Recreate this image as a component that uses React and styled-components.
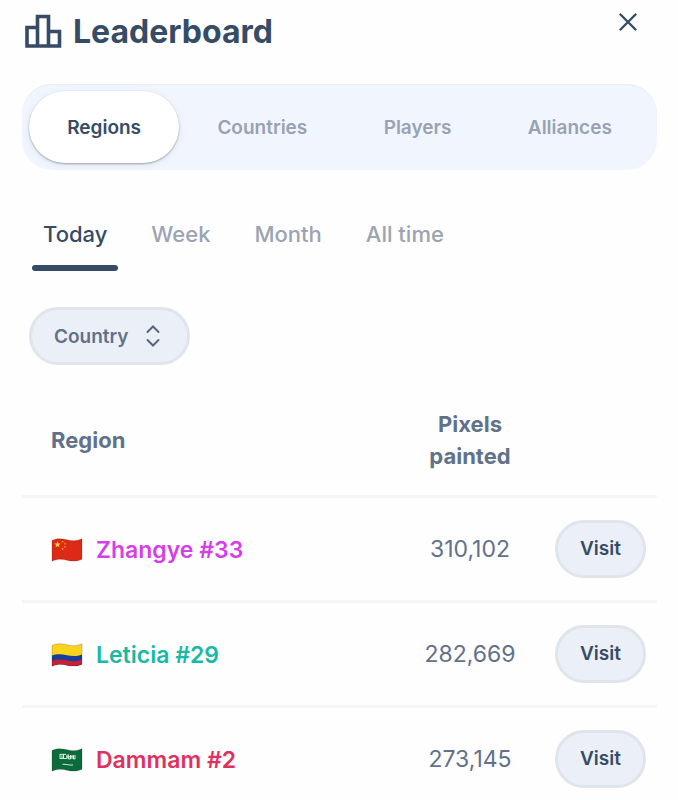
import React, { useState } from 'react';
import styled, { createGlobalStyle } from 'styled-components';

const tabs = ['Regions', 'Countries', 'Players', 'Alliances'];
const periods = ['Today', 'Week', 'Month', 'All time'];
const rows = [
  { id: 1, flag: 'cn', name: 'Zhangye #33', color: '#d53ee8', pixels: '310,102' },
  { id: 2, flag: 'co', name: 'Leticia #29', color: '#19b9a4', pixels: '282,669' },
  { id: 3, flag: 'sa', name: 'Dammam #2', color: '#e0305f', pixels: '273,145' },
];

const wave = 'M1 2.4 C5 0.4 10 0.4 16 1.8 S26 3 31 0.8 V21.2 C26 23.6 21 23.5 16 22.2 S6 21 1 23.2 Z';

const star = (cx, cy, r) =>
  Array.from({ length: 10 }, (_, i) => {
    const radius = i % 2 ? r * 0.4 : r;
    const angle = (Math.PI / 5) * i - Math.PI / 2;
    return `${cx + radius * Math.cos(angle)},${cy + radius * Math.sin(angle)}`;
  }).join(' ');

const Flag = ({ code }) => (
  <FlagSvg viewBox='0 0 32 24' role='img' aria-label={code}>
    {code === 'cn' && (
      <>
        <path d={wave} fill='#dc2a17' />
        <polygon points={star(6.5, 6.6, 3.4)} fill='#ffd23c' />
        <polygon points={star(11.6, 3.6, 1.3)} fill='#f9b62c' />
        <polygon points={star(14, 5.8, 1.3)} fill='#f9b62c' />
        <polygon points={star(14, 8.8, 1.3)} fill='#f9b62c' />
        <polygon points={star(11.6, 11, 1.3)} fill='#f9b62c' />
      </>
    )}
    {code === 'co' && (
      <>
        <path d={wave} fill='#fad31c' />
        <path
          d='M1 12.6 C5 11 10 11 16 12.2 S26 13.2 31 11.4 V21.2 C26 23.6 21 23.5 16 22.2 S6 21 1 23.2 Z'
          fill='#173c9c'
        />
        <path
          d='M1 17.8 C5 16.2 10 16.2 16 17.4 S26 18.4 31 16.6 V21.2 C26 23.6 21 23.5 16 22.2 S6 21 1 23.2 Z'
          fill='#c91f35'
        />
      </>
    )}
    {code === 'sa' && (
      <>
        <path d={wave} fill='#0b6b3b' />
        <path
          d='M9 6 v4.5 h2 v-3 M12.5 6 v5 M14 10.5 h2 v-4 M17.5 6.5 v4.5 h2 v-4 M21 7 v4 M22.5 7 v4 h1.5 v-4 M9 6.4 h6 M15 8.8 h8 M9 10.5 h6'
          fill='none'
          stroke='#dceee3'
          strokeWidth='1'
        />
        <path d='M11.5 16.2 C15 16 18 17.4 22 17' fill='none' stroke='#d5eadf' strokeWidth='1' />
      </>
    )}
    <path d={wave} fill='none' stroke='#000' strokeOpacity='0.22' strokeWidth='0.8' />
  </FlagSvg>
);

const App = () => {
  const [tab, setTab] = useState('Regions');
  const [period, setPeriod] = useState('Today');

  return (
    <Container>
      <GlobalStyle />
      <Header>
        <Title>
          <Podium viewBox='0 0 38 36' aria-hidden='true'>
            <path d='M2 32 V13.5 H12.5 V32 Z M12.5 32 V2.5 H23.5 V32 Z M23.5 32 V17.5 H34.5 V32 Z' />
          </Podium>
          Leaderboard
        </Title>
        <Close aria-label='Close'>
          <svg width='18' height='18' viewBox='0 0 18 18' aria-hidden='true'>
            <path d='M1.5 1.5 L16.5 16.5 M16.5 1.5 L1.5 16.5' />
          </svg>
        </Close>
      </Header>
      <Tabs>
        {tabs.map(item => (
          <Tab key={item} $active={item === tab} onClick={() => setTab(item)}>
            {item}
          </Tab>
        ))}
      </Tabs>
      <Periods>
        {periods.map(item => (
          <Period key={item} $active={item === period} onClick={() => setPeriod(item)}>
            {item}
          </Period>
        ))}
      </Periods>
      <Filter>
        <Select aria-label='Country' defaultValue=''>
          <option value=''>Country</option>
          <option value='cn'>China</option>
          <option value='co'>Colombia</option>
          <option value='sa'>Saudi Arabia</option>
        </Select>
        <Chevrons viewBox='0 0 14 22' aria-hidden='true'>
          <path d='M1.5 7 L7 1.5 L12.5 7 M1.5 15 L7 20.5 L12.5 15' />
        </Chevrons>
      </Filter>
      <Table>
        <thead>
          <tr>
            <HeadCell>Region</HeadCell>
            <HeadCell $center>
              Pixels
              <br />
              painted
            </HeadCell>
            <HeadCell aria-label='Actions' />
          </tr>
        </thead>
        <tbody>
          {rows.map(row => (
            <tr key={row.id}>
              <Cell>
                <Region $color={row.color}>
                  <Flag code={row.flag} />
                  {row.name}
                </Region>
              </Cell>
              <Cell $center>{row.pixels}</Cell>
              <Cell $action>
                <Visit>Visit</Visit>
              </Cell>
            </tr>
          ))}
        </tbody>
      </Table>
    </Container>
  );
};

const GlobalStyle = createGlobalStyle`
  * {
    box-sizing: border-box;
  }
  body {
    margin: 0;
    background-color: #fefefe;
    font-family: Inter, 'Liberation Sans', sans-serif;
    color: #364b66;
  }
  button,
  select {
    font: inherit;
    cursor: pointer;
  }
`;

const Container = styled.main`
  padding: 12px 21px 0 22px;
`;

const Header = styled.header`
  display: flex;
  align-items: flex-start;
  justify-content: space-between;
  height: 72px;
`;

const Title = styled.h1`
  display: flex;
  align-items: center;
  gap: 10px;
  margin: 0 0 0 3px;
  font-size: 32px;
  line-height: 40px;
  font-weight: 700;
`;

const Podium = styled.svg`
  width: 38px;
  height: 36px;
  fill: none;
  stroke: #364b66;
  stroke-width: 3.6;
`;

const Close = styled.button`
  display: flex;
  padding: 1px;
  margin-right: 19px;
  border: none;
  background-color: transparent;

  path {
    fill: none;
    stroke: #364b66;
    stroke-width: 2.4;
    stroke-linecap: round;
  }
`;

const Tabs = styled.nav`
  display: flex;
  padding: 7px;
  border-radius: 30px;
  background-color: #f1f6fe;
  box-shadow: inset 0 1px 1px #e8eef5;
`;

const Tab = styled.button`
  flex: 1 1 auto;
  height: 72px;
  padding: 0 20px;
  border: none;
  border-radius: 36px;
  font-size: 19px;
  font-weight: 600;
  color: ${props => (props.$active ? '#364b66' : '#98a2b3')};
  background-color: ${props => (props.$active ? '#fff' : 'transparent')};
  box-shadow: ${props =>
    props.$active ? '0 1px 2px rgba(40, 50, 70, 0.4), 0 2px 8px rgba(40, 60, 100, 0.08)' : 'none'};
`;

const Periods = styled.nav`
  display: flex;
  gap: 22px;
  margin: 39px 10px 36px;
`;

const Period = styled.button`
  padding: 8px 11px 14px;
  border: none;
  background-color: transparent;
  font-size: 22px;
  line-height: 34px;
  font-weight: 500;
  color: ${props => (props.$active ? '#364b66' : '#9aa4b2')};

  &::after {
    content: '';
    display: block;
    height: 6px;
    margin: 14px -11px -14px;
    border-radius: 3px;
    background-color: ${props => (props.$active ? '#364b66' : 'transparent')};
  }
`;

const Filter = styled.div`
  position: relative;
  width: 161px;
  margin-left: 7px;
`;

const Select = styled.select`
  display: block;
  appearance: none;
  width: 100%;
  height: 58px;
  padding: 0 40px 0 22px;
  border: 3px solid #dfe5eb;
  border-radius: 29px;
  background-color: #ebf0f8;
  font-size: 19px;
  font-weight: 600;
  color: #62718a;
`;

const Chevrons = styled.svg`
  position: absolute;
  top: 18px;
  right: 30px;
  width: 14px;
  height: 22px;
  fill: none;
  stroke: #56667d;
  stroke-width: 2;
  stroke-linecap: round;
  pointer-events: none;
`;

const Table = styled.table`
  width: 100%;
  margin-top: 20px;
  border-collapse: separate;
  border-spacing: 0;
`;

const HeadCell = styled.th`
  height: 113px;
  padding: ${props => (props.$center ? '0' : '0 0 0 29px')};
  border-bottom: 3px solid #f4f5f7;
  font-size: 22px;
  line-height: 32px;
  font-weight: 700;
  text-align: ${props => (props.$center ? 'center' : 'left')};
  color: #62718a;
`;

const Cell = styled.td`
  height: 105px;
  width: ${props => (props.$action && '102px') || (props.$center && '170px') || 'auto'};
  padding: ${props => (props.$action || props.$center ? '0' : '0 0 0 29px')};
  border-bottom: 3px solid #f4f5f7;
  font-size: 23px;
  line-height: 32px;
  text-align: ${props => (props.$center ? 'center' : 'left')};
  color: #62718a;
`;

const Region = styled.div`
  display: flex;
  align-items: center;
  gap: 13px;
  padding-top: 2px;
  font-weight: 600;
  color: ${props => props.$color};
`;

const FlagSvg = styled.svg`
  width: 32px;
  height: 24px;
`;

const Visit = styled.button`
  display: block;
  width: 91px;
  height: 58px;
  padding: 0;
  border: 3px solid #dfe5eb;
  border-radius: 29px;
  background-color: #ebf0f8;
  font-size: 19px;
  font-weight: 600;
  color: #364b66;
`;

export default App;
